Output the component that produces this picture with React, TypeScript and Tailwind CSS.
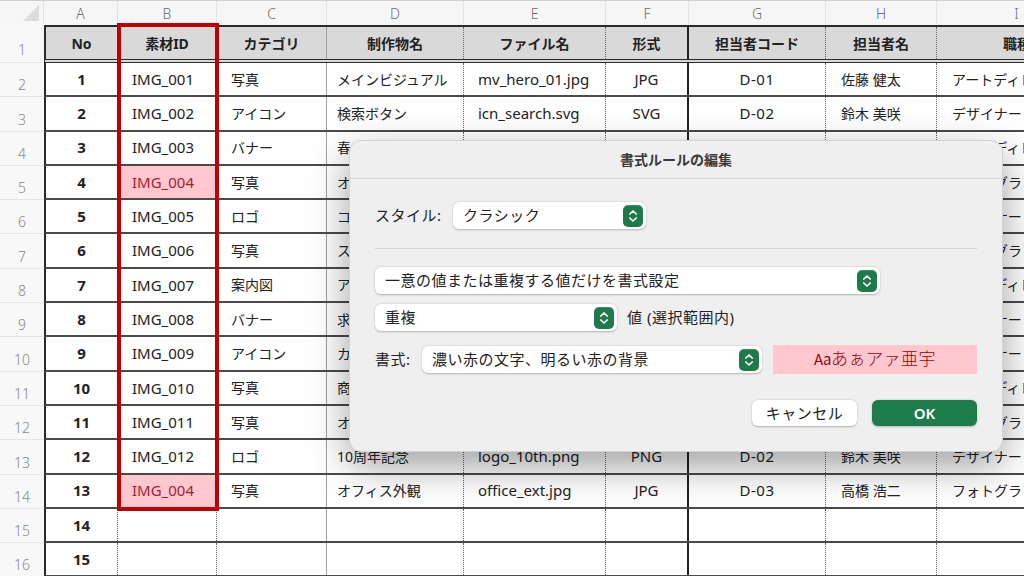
import React from "react";

const rows: string[][] = [
  ["1", "IMG_001", "写真", "メインビジュアル", "mv_hero_01.jpg", "JPG", "D-01", "佐藤 健太", "アートディレクター"],
  ["2", "IMG_002", "アイコン", "検索ボタン", "icn_search.svg", "SVG", "D-02", "鈴木 美咲", "デザイナー"],
  ["3", "IMG_003", "バナー", "春のキャンペーン", "spring_cp.png", "PNG", "D-01", "佐藤 健太", "アートディレクター"],
  ["4", "IMG_004", "写真", "オフィス外観", "office_ext.jpg", "JPG", "D-03", "高橋 浩二", "フォトグラファー"],
  ["5", "IMG_005", "ロゴ", "コーポレートロゴ", "logo_corp.svg", "SVG", "D-02", "鈴木 美咲", "デザイナー"],
  ["6", "IMG_006", "写真", "スタッフ集合", "staff_all.jpg", "JPG", "D-03", "高橋 浩二", "フォトグラファー"],
  ["7", "IMG_007", "案内図", "アクセスマップ", "access_map.png", "PNG", "D-01", "佐藤 健太", "アートディレクター"],
  ["8", "IMG_008", "バナー", "求人募集", "recruit_bn.png", "PNG", "D-02", "鈴木 美咲", "デザイナー"],
  ["9", "IMG_009", "アイコン", "カートボタン", "icn_cart.svg", "SVG", "D-02", "鈴木 美咲", "デザイナー"],
  ["10", "IMG_010", "写真", "商品イメージ", "item_01.jpg", "JPG", "D-01", "佐藤 健太", "アートディレクター"],
  ["11", "IMG_011", "写真", "オフィス内観", "office_in.jpg", "JPG", "D-03", "高橋 浩二", "フォトグラファー"],
  ["12", "IMG_012", "ロゴ", "10周年記念", "logo_10th.png", "PNG", "D-02", "鈴木 美咲", "デザイナー"],
  ["13", "IMG_004", "写真", "オフィス外観", "office_ext.jpg", "JPG", "D-03", "高橋 浩二", "フォトグラファー"],
  ["14", "", "", "", "", "", "", "", ""],
  ["15", "", "", "", "", "", "", "", ""],
];

const headers = ["No", "素材ID", "カテゴリ", "制作物名", "ファイル名", "形式", "担当者コード", "担当者名", "職種"];
const letters = ["A", "B", "C", "D", "E", "F", "G", "H", "I"];

// width + right border per column
const colBox = [
  "w-[72px] border-r border-dotted border-[#666]",
  "w-[99px] border-r border-dotted border-[#666]",
  "w-[110px] border-r border-[#a0a0a0]",
  "w-[137px] border-r border-dotted border-[#666]",
  "w-[142px] border-r border-dotted border-[#666]",
  "w-[83px] border-r-2 border-[#222]",
  "w-[137px] border-r border-dotted border-[#666]",
  "w-[111px] border-r border-dotted border-[#666]",
  "w-[160px]",
];

const letterBox = ["w-[74px]", "w-[99px]", "w-[110px]", "w-[137px]", "w-[142px]", "w-[83px]", "w-[137px]", "w-[111px]", "w-[160px]"];

// latin-only columns get a slightly larger size to match the wider mac font
const colAlign = [
  "justify-center font-bold text-[15px]",
  "pl-[14px] text-[15px]",
  "pl-[14px]",
  "pl-[10px]",
  "pl-[14px] text-[15px]",
  "justify-center text-[15px]",
  "justify-center text-[15px] tracking-[0.5px]",
  "pl-[15px]",
  "pl-[15px]",
];

const Stepper = () => (
  <div className="flex h-[22px] w-[20px] shrink-0 items-center justify-center rounded-[5px] bg-[#1f7a4b] shadow-[inset_0_1px_0_rgba(255,255,255,0.15)]">
    <svg viewBox="0 0 20 22" className="h-[22px] w-[20px]" fill="none" stroke="white" strokeWidth="1.7" strokeLinecap="round" strokeLinejoin="round">
      <path d="M6.8 9 L10 6 L13.2 9" />
      <path d="M6.8 13 L10 16 L13.2 13" />
    </svg>
  </div>
);

const Select = ({ text, className }: { text: string; className: string }) => (
  <div className={`flex h-[27px] items-center justify-between rounded-[6px] bg-white pl-[10px] pr-[3px] shadow-[0_0.5px_2px_rgba(0,0,0,0.25)] ${className}`}>
    <span className="text-[15px] tracking-[0.5px] text-[#222]">{text}</span>
    <Stepper />
  </div>
);

const Dialog = () => (
  <div className="absolute left-[349px] top-[140px] flex h-[312px] w-[654px] flex-col rounded-[12px] border border-[#d4d4d4] bg-[#efefef] shadow-[0_14px_40px_rgba(0,0,0,0.38)]">
    <div className="flex h-[38px] shrink-0 items-center justify-center border-b border-[#d8d8d8] text-[14px] font-bold text-[#3a3a3a]">
      書式ルールの編集
    </div>
    <div className="flex flex-col px-[25px] pt-[23px]">
      <div className="flex items-center">
        <span className="w-[78px] text-[15px] tracking-[0.5px] text-[#222]">スタイル:</span>
        <Select text="クラシック" className="h-[26px] w-[193px]" />
      </div>
      <div className="mt-[19px] h-px bg-[#d6d6d6]" />
      <Select text="一意の値または重複する値だけを書式設定" className="mt-[18px] w-[505px]" />
      <div className="mt-[10px] flex items-center">
        <Select text="重複" className="w-[242px]" />
        <span className="ml-[10px] text-[15px] tracking-[0.5px] text-[#222]">値 (選択範囲内)</span>
      </div>
      <div className="mt-[14px] flex items-center">
        <span className="w-[47px] text-[15px] tracking-[0.5px] text-[#222]">書式:</span>
        <Select text="濃い赤の文字、明るい赤の背景" className="w-[340px]" />
        <div className="ml-[11px] flex h-[29px] w-[204px] items-center justify-center bg-[#ffc7ce] font-['Liberation_Serif','Noto_Sans_CJK_JP',serif] text-[17px] text-[#9c0006]">
          <span className="font-['Noto_Sans_CJK_JP',sans-serif] text-[15px] tracking-[-0.5px]">Aa</span>
          <span className="font-light tracking-[0.5px]">あぁアァ亜宇</span>
        </div>
      </div>
      <div className="mt-[26px] flex justify-end gap-[15px]">
        <button className="flex h-[26px] w-[105px] items-center justify-center rounded-[6px] bg-white text-[15px] tracking-[0.5px] text-[#222] shadow-[0_0.5px_2px_rgba(0,0,0,0.25)]">
          キャンセル
        </button>
        <button className="flex h-[26px] w-[105px] items-center justify-center rounded-[6px] bg-[#1e7b4b] text-[15px] font-semibold text-white shadow-[0_0.5px_2px_rgba(0,0,0,0.25)]">
          OK
        </button>
      </div>
    </div>
  </div>
);

const App = () => {
  return (
    <div className="relative h-[576px] w-[1024px] overflow-hidden bg-white font-['Noto_Sans','Noto_Sans_CJK_JP',sans-serif] text-[14px] text-[#222]">
      {/* column letters */}
      <div className="flex h-[25px] border-t border-[#cfcfcf] bg-[#f6f6f6]">
        <div className="relative w-[44px] shrink-0 border-r border-[#e2e2e2]">
          <svg viewBox="0 0 44 24" className="absolute inset-0 h-[24px] w-[44px]">
            <path d="M39 4 L39 20 L23 20 Z" fill="#dcdcdc" />
          </svg>
        </div>
        {letters.map((l, i) => (
          <div key={l} className={`${letterBox[i]} flex shrink-0 items-center justify-center border-r border-[#e4e4e4] text-[14px] font-light text-[#6e6e6e]`}>
            {l}
          </div>
        ))}
      </div>

      {/* header row */}
      <div className="flex h-[38px]">
        <div className="flex w-[44px] shrink-0 items-end justify-center border-b border-[#e6e6e6] bg-[#f8f8f8] pb-[2px] text-[14px] font-light text-[#888]">
          1
        </div>
        <div className="flex border-l-2 border-t-2 border-b-[4px] border-double border-[#2a2a2a] bg-[#d9d9d9]">
          {headers.map((h, i) => (
            <div key={h} className={`${colBox[i]} flex shrink-0 items-center justify-center font-bold text-[#222]`}>
              {h}
            </div>
          ))}
        </div>
      </div>

      {/* data rows */}
      {rows.map((r, ri) => (
        <div key={ri} className="flex h-[34.3px]">
          <div className="flex w-[44px] shrink-0 items-end justify-center border-b border-[#e6e6e6] bg-[#f8f8f8] pb-[1px] text-[14px] font-light text-[#888]">
            {ri + 2}
          </div>
          <div className="flex border-b-2 border-l-2 border-b-[#4a4a4a] border-l-[#2a2a2a] bg-white">
            {r.map((c, ci) => {
              const dup = ci === 1 && c === "IMG_004";
              return (
                <div
                  key={ci}
                  className={`${colBox[ci]} ${colAlign[ci]} flex shrink-0 items-center overflow-hidden whitespace-nowrap ${dup ? "bg-[#ffc7ce] text-[#b01a2e]" : ""}`}
                >
                  {c}
                </div>
              );
            })}
          </div>
        </div>
      ))}

      {/* highlighted range outline */}
      <div className="pointer-events-none absolute left-[117px] top-[23px] h-[488px] w-[102px] border-4 border-[#c00000]" />

      <Dialog />
    </div>
  );
};

export default App;
